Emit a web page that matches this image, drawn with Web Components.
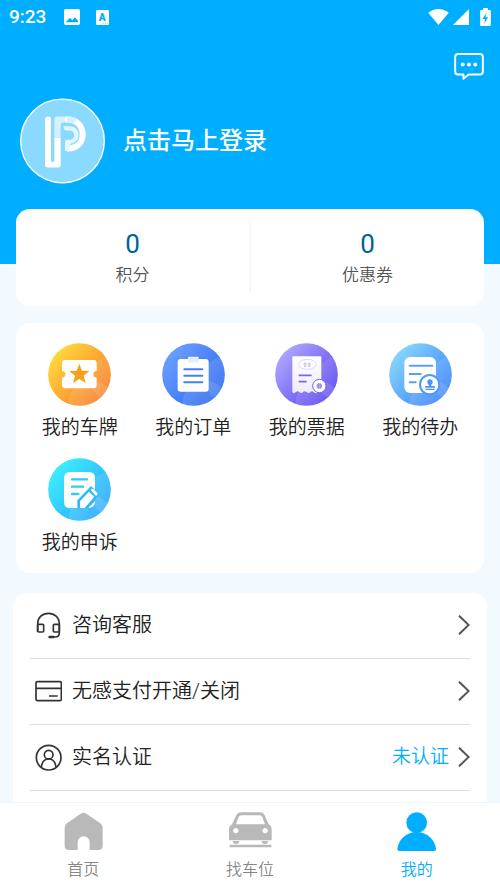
<!DOCTYPE html>
<html lang="zh-CN">
<head>
<meta charset="utf-8">
<meta name="viewport" content="width=device-width, initial-scale=1">
<title>我的</title>
<style>
  html, body { height: 100%; margin: 0; }
  body {
    font-family: Roboto, "Noto Sans CJK SC DemiLight", "Noto Sans CJK SC", sans-serif;
    font-weight: 350;
    color: #333;
    --brand: #00aeff;
    --page: #f2faff;
  }
</style>
</head>
<body>
<parking-app></parking-app>

<script>
const BUBBLES = `<g clip-path="url(#disc)" fill="#fff" opacity=".9"><circle cx="128" cy="178" r="66" fill-opacity=".14"/><circle cx="196" cy="106" r="69" fill-opacity=".12"/></g>`;
const disc = (from, to, art) => `<svg viewBox="0 0 189 189"><defs>
  <linearGradient id="g" x1=".1" y1=".15" x2=".9" y2=".85"><stop stop-color="${from}"/><stop offset="1" stop-color="${to}"/></linearGradient>
  <clipPath id="disc"><circle cx="94.500" cy="94.500" r="94"/></clipPath></defs>
  <circle cx="94.500" cy="94.500" r="94" fill="url(#g)"/>${BUBBLES}${art}</svg>`;

const ICONS = {
  picture: `<svg viewBox="0 0 48 48"><path fill="#fff" fill-rule="evenodd" d="M5 0h38q5 0 5 5v38q0 5-5 5H5q-5 0-5-5V5q0-5 5-5zM6 40h36v-5l-9-10-8 9-7-8-12 13z"/></svg>`,
  letter: `<svg viewBox="0 0 40 46"><rect width="40" height="46" rx="4" fill="#fff"/><text x="19" y="33" text-anchor="middle" font-family="Roboto, sans-serif" font-weight="900" font-size="31" fill="#00aeff">A</text><path d="M22 41h3m3 0h3m3 0h3" stroke="#00aeff" stroke-width="3" opacity=".5"/></svg>`,
  wifi: `<svg viewBox="0 0 64 50"><path fill="#fff" d="M32 50 0 12Q14 0 32 0t32 12z"/></svg>`,
  signal: `<svg viewBox="0 0 48 48"><path fill="#fff" d="M48 0v48H0z"/></svg>`,
  battery: `<svg viewBox="0 0 32 54"><path fill="#fff" fill-rule="evenodd" d="M9 0h14v6h6q3 0 3 3v42q0 3-3 3H3q-3 0-3-3V9q0-3 3-3h6zM19 14 7 33h8l-3 14 12-19h-8z"/></svg>`,
  message: `<svg viewBox="0 0 90 82" fill="none" stroke="#fff" stroke-width="6" stroke-linejoin="round"><path d="M12 3h66q9 0 9 9v44q0 9-9 9H44L28 78V65H12q-9 0-9-9V12q0-9 9-9z"/><g fill="#fff" stroke="none"><circle cx="26" cy="35" r="6"/><circle cx="45" cy="35" r="6"/><circle cx="64" cy="35" r="6"/></g></svg>`,
  logo: `<svg viewBox="0 0 255 255"><circle cx="127.500" cy="127.500" r="125.500" fill="#8ad9ff" stroke="#fff" stroke-width="4"/>
    <path fill="#fff" d="M75 63q0-9 9-9t9 9v122q0 6 5 6t5-6v-67h19v80q0 9-9 9H84q-9 0-9-9z"/>
    <path fill="#d5f1ff" d="M103 63q0-9 9-9h31v18h-15q-6 0-6 6v40h-19z"/>
    <path fill="none" stroke="#fff" stroke-width="18" stroke-linecap="round" d="M143 63c28 0 45 21 45 45s-18 42-44 42"/>
    <path fill="#e4f6ff" d="M131 83h17a26 26 0 0 1 4 52l-7 24q-10-1-10-10v-18q0-7 8-7h6a14 14 0 0 0 0-28h-9q-9 0-9-8z"/>
    <path fill="#d5f1ff" d="M140 54h5q13 0 25 8l-10 14q-8-4-17-4h-3z"/></svg>`,
  ticket: disc('#ffd93f', '#f87d2a', `<path fill="#fff" d="M51 51h86q9 0 9 9v24a10 10 0 0 0 0 20v23q0 9-9 9H51q-9 0-9-9v-23a10 10 0 0 0 0-20V60q0-9 9-9z"/><path fill="#f9a01b" d="m94 62 8 21 22 1-17 14 6 22-19-12-19 12 6-22-17-14 22-1z"/>`),
  order: disc('#6b9fff', '#2d6bf0', `<rect x="47" y="48" width="93" height="98" rx="9" fill="#fff"/><rect x="78" y="41" width="32" height="18" rx="3" fill="#e6efff"/><path d="M67 79h54M67 98h54M67 118h54" stroke="#4480f5" stroke-width="6" stroke-linecap="round"/>`),
  receipt: disc('#b0a6ff', '#5846ee', `<defs><linearGradient id="paper" x1="0" y1="0" x2="0" y2="1"><stop stop-color="#fff"/><stop offset="1" stop-color="#eeebff"/></linearGradient></defs>
    <path fill="url(#paper)" d="M54 40h82q3 0 3 3v104q-6-5-9 0-6 8-14 0-7-5-10 0-5 6-11 0-7-5-11 0-5 6-11 0-6-5-10 0-7 7-11 0V43q0-3 2-3z"/>
    <ellipse cx="97" cy="64" rx="26" ry="15" fill="#fff" stroke="#cbc4ff" stroke-width="2"/><path d="M86 61h9m3 0h9M86 66h9m3 0h9M90 59v11m13-11v11M87 70h7m5 0h7" stroke="#b5aef8" stroke-width="2"/>
    <path d="M71 97h39M71 116h24" stroke="#7569ee" stroke-width="5"/><circle cx="133" cy="129" r="20" fill="#fff" stroke="#7464f4" stroke-width="3"/><circle cx="133" cy="129" r="7" fill="#c9c2ff" stroke="#a59cf7" stroke-width="3"/><path d="M125 126h16m-16 6h16m-11-11v16m6-16v16" stroke="#8c80f3" stroke-width="2"/>`),
  todo: disc('#86d8fb', '#3b82fb', `<rect x="46" y="42" width="95" height="108" rx="17" fill="#fff"/><path d="M62 68h68M62 93h33M62 118h18" stroke="#55a2f8" stroke-width="6" stroke-linecap="round"/><circle cx="122" cy="125" r="32" fill="#4d9bfb"/><circle cx="122" cy="125" r="26" fill="#fff"/><g fill="#4d94fa"><circle cx="123" cy="117" r="8"/><path d="M119 120h8v9h9q2 0 2 2v3h-30v-3q0-2 2-2h9z"/><rect x="110" y="137" width="27" height="4"/></g>`),
  appeal: disc('#3deeff', '#2aa8fb', `<path fill="#fff" d="M66 42h57q18 0 18 18v72q0 18-18 18H66q-18 0-18-18V60q0-18 18-18z"/><path d="M72 64h45M72 86h33M72 108h19" stroke="#2fc9fb" stroke-width="7" stroke-linecap="round"/><path fill="#2bbdfb" d="M88 151v-24l41-43 25 24-13 17v26z"/><path fill="#fff" d="M96 150v-20l27-29 16 15-29 34zM128 96l3-3q3-2 5 0l12 12q2 3 0 5l-4 4zM121 150l20-21v3q0 16-18 18z"/>`),
  headset: `<svg viewBox="0 0 81 81" fill="none" stroke="#333" stroke-width="5"><path d="M8 60V36C8 16 22 4 40 4s33 12 33 32v26q0 13-14 13H48"/><rect x="8" y="37" width="18" height="23" rx="3"/><rect x="55" y="37" width="18" height="23" rx="3"/><path d="M44 75h11" stroke-width="8" stroke-linecap="round"/></svg>`,
  card: `<svg viewBox="0 0 81 81" fill="none" stroke="#333" stroke-width="5"><rect x="3" y="11" width="76" height="57" rx="4"/><path d="M3 31h76M42 54h26"/></svg>`,
  person: `<svg viewBox="0 0 81 81" fill="none" stroke="#333" stroke-width="5"><circle cx="41" cy="41" r="37"/><circle cx="41" cy="32" r="13"/><path d="M19 69c2-15 10-24 22-24s20 9 22 24"/></svg>`,
  chevron: `<svg viewBox="0 0 36 60" fill="none" stroke="#555" stroke-width="6"><path d="m3 2 29 28L3 58"/></svg>`,
  home: `<svg viewBox="0 0 129 117"><path fill="currentColor" d="M56 5q8-6 17 0l42 29q7 5 7 13v54q0 13-13 13H83V91a18 18 0 0 0-36 0v23H21Q8 114 8 101V47q0-8 7-13z"/></svg>`,
  car: `<svg viewBox="0 0 129 117"><path fill="currentColor" fill-rule="evenodd" d="M37 1h55q11 0 15 9l12 27q9 5 9 15v33H0V52q0-10 9-15L22 10q4-9 15-9zM38 10q-7 0-9 5l-8 22h87l-8-22q-2-5-9-5zM20 48a8 8 0 1 0 1 0zm88 0a8 8 0 1 0 1 0zM11 87h20q-1 9-10 9t-10-9zm87 0h20q-1 9-10 9t-10-9zM2 98h125v8H2z"/></svg>`,
  user: `<svg viewBox="0 0 129 117"><g fill="currentColor"><circle cx="65" cy="32" r="31"/><path d="M65 60c32 0 56 25 58 51q0 6-6 6H13q-6 0-6-6c2-26 26-51 58-51z"/></g></svg>`
};

function define(name, template) {
  customElements.define(name, class extends HTMLElement {
    constructor() {
      super();
      this.attachShadow({ mode: 'open' }).innerHTML = template(this);
    }
  });
}

customElements.define('ui-icon', class extends HTMLElement {
  connectedCallback() {
    if (this.shadowRoot) return;
    this.attachShadow({ mode: 'open' }).innerHTML =
      `<style>:host{display:block;flex:none}svg{display:block;width:100%;height:100%}</style>${ICONS[this.getAttribute('name')]}`;
    this.setAttribute('aria-hidden', 'true');
  }
});

define('status-bar', () => `<style>
  :host { display: flex; align-items: center; height: 34px; padding: 0 9px; color: #fff; }
  time { font: 500 19px/34px Roboto, sans-serif; margin-right: 18px; }
  .space { flex: 1; }
  .pic { width: 16px; height: 16px; margin-right: 16px; }
  .let { width: 13px; height: 15px; }
  .wifi { width: 21px; height: 16px; margin-right: 4px; }
  .sig { width: 16px; height: 16px; margin-right: 11px; }
  .bat { width: 11px; height: 18px; }
</style>
<time>9:23</time><ui-icon class="pic" name="picture"></ui-icon><ui-icon class="let" name="letter"></ui-icon>
<span class="space"></span>
<ui-icon class="wifi" name="wifi"></ui-icon><ui-icon class="sig" name="signal"></ui-icon><ui-icon class="bat" name="battery"></ui-icon>`);

define('profile-header', () => `<style>
  :host { display: block; background: var(--brand); padding-bottom: 80px; }
  button { border: 0; background: none; padding: 0; color: #fff; font: inherit; cursor: pointer; }
  .tools { display: flex; justify-content: flex-end; padding: 19px 16px 0; }
  .tools ui-icon { width: 30px; height: 27px; }
  .login { display: flex; align-items: center; gap: 18px; margin: 18px 20px 0; font-size: 24px; line-height: 36px; font-weight: 500; font-family: Roboto, "Noto Sans CJK SC", sans-serif; }
  .login ui-icon { width: 85px; height: 86px; }
</style>
<status-bar></status-bar>
<div class="tools"><button aria-label="消息"><ui-icon name="message"></ui-icon></button></div>
<button class="login"><ui-icon name="logo"></ui-icon><span><slot></slot></span></button>`);

define('stat-cell', el => `<style>
  :host { display: block; flex: 1; text-align: center; }
  :host(:not(:first-child)) { border-left: 2px solid #f6f7f8; }
  button { display: block; width: 100%; border: 0; background: none; padding: 7px 0 0; font: inherit; cursor: pointer; }
  b { display: block; font-weight: 400; font-size: 26px; line-height: 30px; color: #006496; }
  span { display: block; font-size: 17px; line-height: 32px; color: #555; }
</style><button><b><slot name="value"></slot></b><span><slot></slot></span></button>`);

define('stats-card', () => `<style>
  :host { display: flex; position: relative; margin: -55px 16px 0; padding: 13px 0; background: #fff; border-radius: 14px; }
  ::slotted(*) { min-height: 71px; }
</style><slot></slot>`);

define('service-grid', () => `<style>
  :host { display: grid; grid-template-columns: repeat(4, 1fr); row-gap: 16px; margin: 17px 16px 0; padding: 20px 7px 16px; background: #fff; border-radius: 14px; }
</style><slot></slot>`);

define('service-item', el => `<style>
  :host { display: block; }
  button { display: flex; flex-direction: column; align-items: center; gap: 8px; width: 100%; padding: 0; border: 0; background: none; font: inherit; font-size: 19px; line-height: 28px; color: #222; cursor: pointer; }
  ui-icon { width: 63px; height: 63px; }
</style><button><ui-icon name="${el.getAttribute('icon')}"></ui-icon><span><slot></slot></span></button>`);

define('menu-card', () => `<style>
  :host { display: block; margin: 20px 13px 0; padding: 0 17px 24px; background: #fff; border-radius: 14px; }
</style><slot></slot>`);

define('menu-row', el => `<style>
  :host { display: block; border-bottom: 1px solid #ddd; }
  button { display: flex; align-items: center; width: 100%; height: 65px; padding: 0 0 1px 5px; border: 0; background: none; font: inherit; font-size: 20px; line-height: 30px; color: #222; cursor: pointer; }
  .icon { width: 27px; height: 27px; margin-right: 10px; }
  .label { flex: 1; text-align: left; }
  .note { font-size: 19px; color: var(--brand); margin-right: 9px; }
  .go { width: 12px; height: 20px; }
</style><button><ui-icon class="icon" name="${el.getAttribute('icon')}"></ui-icon><span class="label"><slot></slot></span><span class="note"><slot name="note"></slot></span><ui-icon class="go" name="chevron"></ui-icon></button>`);

define('tab-bar', () => `<style>
  :host { display: block; flex: none; background: #fff; border-top: 1px solid #ebf5fa; }
  nav { display: flex; }
</style><nav><slot></slot></nav>`);

define('tab-item', el => `<style>
  :host { display: block; flex: 1; color: #888; --glyph: #b9b9b9; }
  :host([active]) { color: var(--brand); --glyph: var(--brand); }
  a { display: flex; flex-direction: column; align-items: center; gap: 6px; padding: 9px 0 6px; color: inherit; text-decoration: none; font-size: 16px; line-height: 25px; }
  ui-icon { width: 43px; height: 39px; color: var(--glyph); }
</style><a href="#${el.getAttribute('icon')}"${el.hasAttribute('active') ? ' aria-current="page"' : ''}><ui-icon name="${el.getAttribute('icon')}"></ui-icon><span><slot></slot></span></a>`);

define('parking-app', () => `<style>
  :host { display: flex; flex-direction: column; height: 100vh; background: var(--page); }
  main { flex: 1; min-height: 0; overflow-y: auto; scrollbar-width: none; }
</style>
<main>
  <profile-header>点击马上登录</profile-header>
  <stats-card>
    <stat-cell><span slot="value">0</span>积分</stat-cell>
    <stat-cell><span slot="value">0</span>优惠券</stat-cell>
  </stats-card>
  <service-grid>
    <service-item icon="ticket">我的车牌</service-item>
    <service-item icon="order">我的订单</service-item>
    <service-item icon="receipt">我的票据</service-item>
    <service-item icon="todo">我的待办</service-item>
    <service-item icon="appeal">我的申诉</service-item>
  </service-grid>
  <menu-card>
    <menu-row icon="headset">咨询客服</menu-row>
    <menu-row icon="card">无感支付开通/关闭</menu-row>
    <menu-row icon="person">实名认证<span slot="note">未认证</span></menu-row>
  </menu-card>
</main>
<tab-bar>
  <tab-item icon="home">首页</tab-item>
  <tab-item icon="car">找车位</tab-item>
  <tab-item icon="user" active>我的</tab-item>
</tab-bar>`);
</script>
</body>
</html>
